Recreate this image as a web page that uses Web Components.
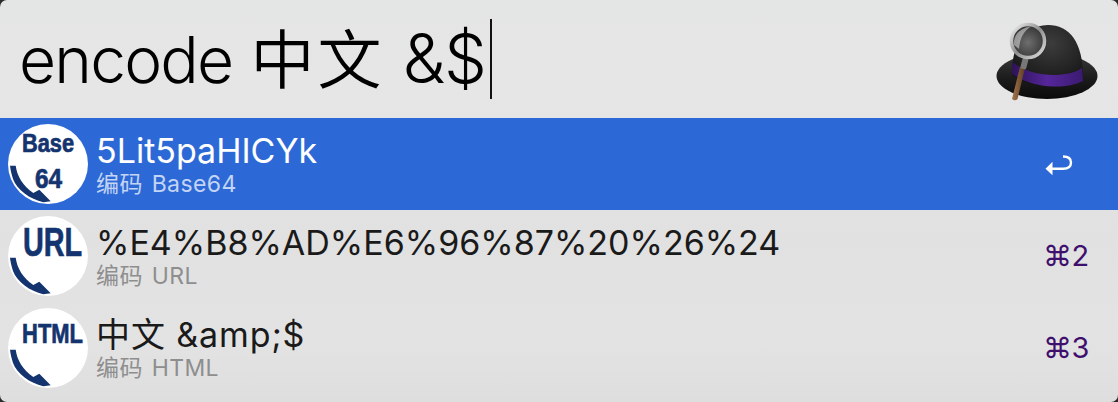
<!DOCTYPE html>
<html lang="zh">
<head>
<meta charset="utf-8">
<title>Alfred</title>
<style>
  html, body { margin: 0; height: 100%; background: #2c2c2c; }
</style>
</head>
<body>
<alfred-window>
  <search-bar slot="search" query="encode 中文 &amp;$"></search-bar>
  <result-row selected label="Base64" title="5Lit5paHICYk" subtitle="编码 Base64"></result-row>
  <result-row label="URL" shortcut="⌘2" title="%E4%B8%AD%E6%96%87%20%26%24" subtitle="编码 URL"></result-row>
  <result-row style="--title-spacing: .9px" label="HTML" shortcut="⌘3" title="中文 &amp;amp;$" subtitle="编码 HTML"></result-row>
</alfred-window>

<script>
class AlfredWindow extends HTMLElement {
  constructor() {
    super();
    this.shadowDOM = this.attachShadow({mode: "open"});
  }

  connectedCallback() {
    this.shadowDOM.innerHTML = `
      <style>
        :host {
          display: flex;
          flex-direction: column;
          width: 1118px;
          height: 402px;
          box-sizing: border-box;
          padding-bottom: 8px;
          border-radius: 7px;
          overflow: hidden;
          background: linear-gradient(#e4e5e5 0, #e6e6e6 90px, #e1e1e1 240px, #e3e3e3 340px, #dedede 100%);
        }
      </style>
      <slot name="search"></slot>
      <slot></slot>
    `;
  }
}

class SearchBar extends HTMLElement {
  constructor() {
    super();
    this.shadowDOM = this.attachShadow({mode: "open"});
  }

  connectedCallback() {
    this.shadowDOM.innerHTML = `
      <style>
        :host {
          display: flex;
          align-items: center;
          justify-content: space-between;
          height: 118px;
          flex: none;
          padding: 0 16px 0 19px;
          box-sizing: border-box;
        }
        .query {
          display: flex;
          align-items: center;
          font: 340 64px/80px "Inter", "Noto Sans CJK SC", sans-serif;
          letter-spacing: -1.8px;
          word-spacing: 2px;
          color: #000;
          white-space: pre;
        }
        .cjk { letter-spacing: 3px; }
        .tail { font-size: 68px; letter-spacing: -1px; word-spacing: 0; }
        .caret { width: 1.500px; height: 80px; margin-left: 4px; background: #111; }
      </style>
      <div class="query"><span id="text"></span><span class="caret"></span></div>
      <alfred-hat></alfred-hat>
    `;
    // CJK runs are spaced wider, and what follows them is a size up
    const text = this.shadowDOM.querySelector("#text");
    this.getAttribute("query").split(/([\u4e00-\u9fff]+)/).forEach((part, i) => {
      const span = document.createElement("span");
      if (i === 1) span.className = "cjk";
      if (i === 2) span.className = "tail";
      span.textContent = part;
      text.appendChild(span);
    });
  }
}

class AlfredHat extends HTMLElement {
  constructor() {
    super();
    this.shadowDOM = this.attachShadow({mode: "open"});
  }

  connectedCallback() {
    this.shadowDOM.innerHTML = `
      <style>
        :host { display: block; width: 110px; height: 85px; margin-top: 3px; flex: none; }
        svg { display: block; }
      </style>
      <svg width="110" height="85" viewBox="992 15 110 85">
        <defs>
          <linearGradient id="brim" x1="0" y1="0" x2="0" y2="1">
            <stop offset="0" stop-color="#3a3a3a"/>
            <stop offset=".55" stop-color="#1c1c1c"/>
            <stop offset="1" stop-color="#0a0a0a"/>
          </linearGradient>
          <radialGradient id="crown" cx=".55" cy=".3" r=".75">
            <stop offset="0" stop-color="#3c3c3c"/>
            <stop offset=".6" stop-color="#232323"/>
            <stop offset="1" stop-color="#121212"/>
          </radialGradient>
          <linearGradient id="band" x1="0" y1="0" x2="1" y2="0">
            <stop offset="0" stop-color="#2e1358"/>
            <stop offset=".5" stop-color="#55269a"/>
            <stop offset="1" stop-color="#3b1a70"/>
          </linearGradient>
          <radialGradient id="glass" cx=".5" cy=".55" r=".6">
            <stop offset="0" stop-color="#6e6e6e"/>
            <stop offset="1" stop-color="#2e2e2e"/>
          </radialGradient>
          <linearGradient id="rim" x1="0" y1="0" x2="1" y2="1">
            <stop offset="0" stop-color="#f2f2f2"/>
            <stop offset=".5" stop-color="#8e8e8e"/>
            <stop offset="1" stop-color="#e0e0e0"/>
          </linearGradient>
          <linearGradient id="handle" x1="0" y1="0" x2="1" y2="0">
            <stop offset="0" stop-color="#a3764e"/>
            <stop offset="1" stop-color="#5e3d22"/>
          </linearGradient>
        </defs>
        <ellipse cx="1047" cy="73" rx="50.500" ry="23" fill="url(#brim)"/>
        <path d="M1012 72 C1011 40 1027 22 1048 22 C1070 22 1084 40 1083 78 C1065 88 1030 86 1012 72Z" fill="url(#crown)"/>
        <path d="M1012 59 C1024 68 1038 72 1053 72 C1064 72 1075 70 1082 65 L1083 78 C1075 82 1064 84 1053 83.500 C1038 83 1024 79 1012 71Z" fill="url(#band)"/>
        <path d="M1020 64 L1025 65 L1017.500 96 Q1015 98.500 1012 96Z" fill="url(#handle)"/>
        <rect x="1021.500" y="55" width="6" height="11" rx="1.500" fill="#777" transform="rotate(15 1024 60)"/>
        <circle cx="1028" cy="38" r="16.500" fill="url(#glass)" stroke="url(#rim)" stroke-width="3.500"/>
        <path d="M1014 42 C1013 32 1020 25 1031 23.500 C1024 28 1020 34 1019 46Z" fill="#fff" opacity=".45"/>
      </svg>
    `;
  }
}

class ActionIcon extends HTMLElement {
  constructor() {
    super();
    this.shadowDOM = this.attachShadow({mode: "open"});
  }

  // condensed bold label: Liberation Sans squeezed horizontally
  word(text, x, y, size, squeeze) {
    return `<text transform="translate(${x} ${y}) scale(${squeeze} 1)" font-size="${size}">${text}</text>`;
  }

  connectedCallback() {
    const label = this.getAttribute("label");
    const navy = "#14346f";
    let text = "";
    if (label === "Base64") {
      text = this.word("Base", 40, 28, 25, .87) + this.word("64", 40.5, 64, 28, .87);
    } else if (label === "URL") {
      text = this.word("URL", 44.5, 40, 40, .72);
    } else {
      text = this.word("HTML", 44.5, 35, 28, .784);
    }
    this.shadowDOM.innerHTML = `
      <style>
        :host { display: block; width: 80px; height: 80px; flex: none; }
        svg { display: block; }
        text {
          font-family: "Liberation Sans", sans-serif;
          font-weight: 700;
          fill: ${navy};
          stroke: ${navy};
          stroke-width: .7px;
          text-anchor: middle;
        }
      </style>
      <svg width="80" height="80" viewBox="0 0 80 80">
        <circle cx="40" cy="40" r="40" fill="#fff"/>
        ${text}
        <path d="M2 41.700 H7.700 C9 52 15 62 25.300 69 L31.300 65.700 L42.700 77.300 L35.300 78.300 C22 75 9 66 5 55 C3.500 50 2.500 46 2 41.700Z" fill="${navy}"/>
      </svg>
    `;
  }
}

class ResultRow extends HTMLElement {
  constructor() {
    super();
    this.shadowDOM = this.attachShadow({mode: "open"});
  }

  connectedCallback() {
    const shortcut = this.getAttribute("shortcut");
    this.shadowDOM.innerHTML = `
      <style>
        :host {
          display: flex;
          align-items: center;
          height: 92px;
          flex: none;
          padding: 0 30px 0 8px;
          box-sizing: border-box;
          gap: 8px;
          font-family: "Inter", "Noto Sans CJK SC", sans-serif;
        }
        :host([selected]) { background: #2d69d6; }
        .text { flex: 1; min-width: 0; display: flex; flex-direction: column; }
        .title { font-size: 34px; line-height: 40px; letter-spacing: var(--title-spacing, 0); color: #1a1a1a; white-space: pre; }
        .subtitle { font-size: 23px; line-height: 26px; letter-spacing: .4px; word-spacing: 2px; color: #8e8e8e; white-space: pre; }
        :host([selected]) .title { color: #fff; }
        :host([selected]) .subtitle { color: #c3d4f4; }
        .end { width: 44px; flex: none; display: flex; align-items: center; }
        .shortcut { font: 29px/36px "Inter", "DejaVu Sans", sans-serif; color: #3f0f6e; white-space: pre; margin-left: -1px; letter-spacing: -.5px; }
        .return { display: block; margin-left: 1px; margin-top: 3px; }
      </style>
      <action-icon label="${this.getAttribute("label")}"></action-icon>
      <div class="text">
        <span class="title"></span>
        <span class="subtitle"></span>
      </div>
      <div class="end">
      ${shortcut ? `<span class="shortcut">${shortcut}</span>` : `
        <svg class="return" width="28" height="21" viewBox="0 0 28 21">
          <path d="M18 1.500 Q26 1.500 26 7.500 Q26 13.700 18 13.700 H5" fill="none" stroke="#fff" stroke-width="2.400"/>
          <path d="M0.500 13.700 L7.500 6.700 V20.300Z" fill="#fff"/>
        </svg>`}
      </div>
    `;
    this.shadowDOM.querySelector(".title").textContent = this.getAttribute("title");
    this.shadowDOM.querySelector(".subtitle").textContent = this.getAttribute("subtitle");
  }
}

customElements.define("alfred-window", AlfredWindow);
customElements.define("search-bar", SearchBar);
customElements.define("alfred-hat", AlfredHat);
customElements.define("action-icon", ActionIcon);
customElements.define("result-row", ResultRow);
</script>
</body>
</html>
